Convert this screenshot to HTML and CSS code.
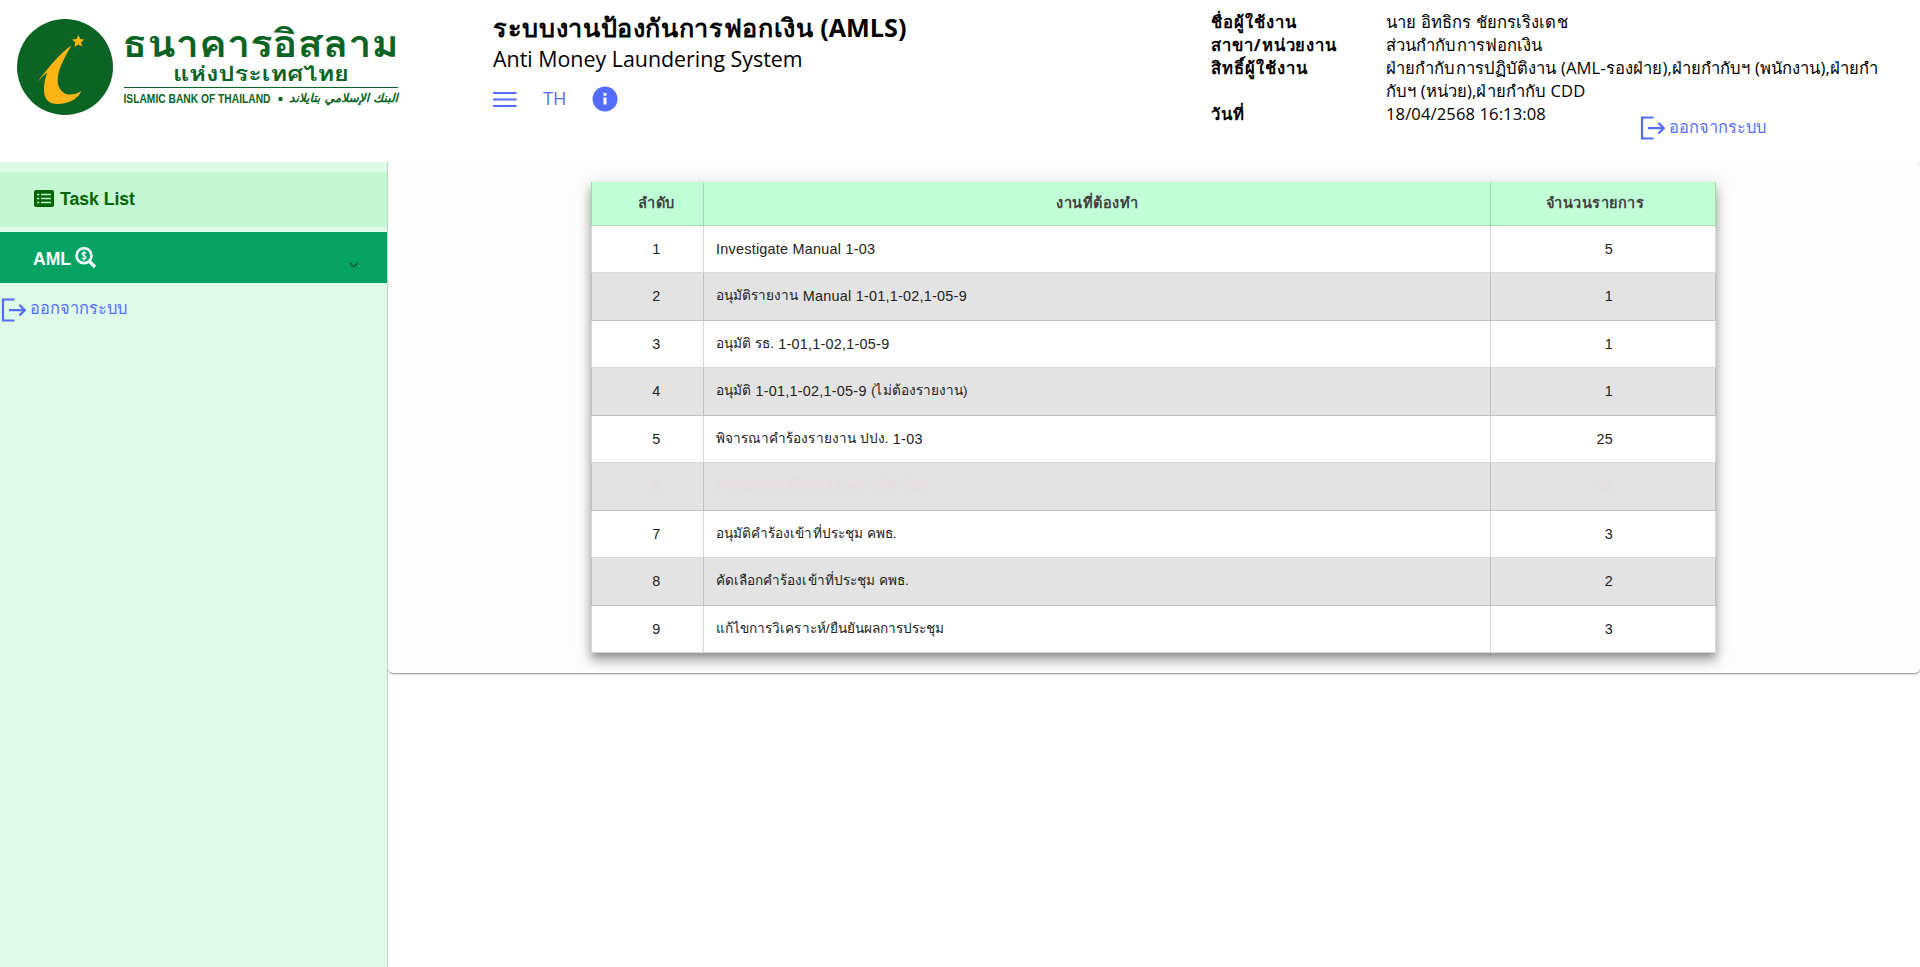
FILE: index.html
```html
<!DOCTYPE html>
<html lang="th">
<head>
<meta charset="utf-8">
<title>AMLS</title>
<link rel="stylesheet" href="styles.css">
</head>
<body>
<svg class="defs" width="0" height="0">
  <symbol id="exit" viewBox="0 0 26 24"><path d="M13.500 1.500H2v21h11.500M8 12.200h16M18.400 6.900l5.400 5.300-5.400 5.300" fill="none" stroke="currentColor" stroke-width="2.200"/></symbol>
</svg>
<header class="header">
  <svg class="logo" viewBox="0 0 420 162" width="420" height="162">
    <circle cx="65" cy="67" r="48" fill="#0b6424"/>
    <path d="M71.500 45.500C60 53 49 67 36.500 83C40 79 43.500 75 47 73C42 88 42 104 57 104C70 104 78 98 81.500 91C72 97 61 96 58 84C56 73 63 60 71.500 45.500Z" fill="#fdb515"/>
    <path d="M78.500 35l1.600 4 4 .6-3 2.800 1.200 4.100-3.900-1.900-3.900 2.100.7-4.400-3.200-2.800 4.500-.4z" fill="#fdb515"/>
    <g fill="#0b6424">
      <text class="logo-th" x="122" y="57" font-size="38" textLength="277" lengthAdjust="spacingAndGlyphs">ธนาคารอิสลาม</text>
      <text class="logo-th" x="173" y="81" font-size="20" textLength="176" lengthAdjust="spacingAndGlyphs">แห่งประเทศไทย</text>
      <rect x="124" y="87" width="274" height="1"/>
      <text class="logo-en" x="123.500" y="103" font-size="12" textLength="147" lengthAdjust="spacingAndGlyphs">ISLAMIC BANK OF THAILAND</text>
      <circle cx="280.500" cy="99" r="2.200"/>
      <text class="logo-ar" x="289" y="102" font-size="12" textLength="109" lengthAdjust="spacingAndGlyphs">البنك الإسلامي بتايلاند</text>
    </g>
  </svg>
  <div class="brand">
    <h1 class="title"><span class="title-th">ระบบงานป้องกันการฟอกเงิน</span> (AMLS)</h1>
    <div class="subtitle">Anti Money Laundering System</div>
    <nav class="tools">
      <svg width="24" height="17" viewBox="0 0 24 17"><path d="M0 2h23.500M0 8.500h23.500M0 15h23.500" stroke="#536dfe" stroke-width="2"/></svg>
      <span class="lang">TH</span>
      <svg width="26" height="26" viewBox="0 0 26 26"><circle cx="13" cy="13" r="12.500" fill="#536dfe"/><path d="M11.500 7h3v2.700h-3zM11.500 11.500h3v7h-3z" fill="#fff"/></svg>
    </nav>
  </div>
  <dl class="info">
    <dt>ชื่อผู้ใช้งาน</dt><dd>นาย อิทธิกร ชัยกรเริงเดช</dd>
    <dt>สาขา/หน่วยงาน</dt><dd>ส่วนกำกับการฟอกเงิน</dd>
    <dt>สิทธิ์ผู้ใช้งาน</dt><dd>ฝ่ายกำกับการปฏิบัติงาน (AML-รองฝ่าย),ฝ่ายกำกับฯ (พนักงาน),ฝ่ายกำ<br>กับฯ (หน่วย),ฝ่ายกำกับ CDD</dd>
    <dt>วันที่</dt><dd>18/04/2568 16:13:08</dd>
    <a class="logout logout-top"><svg width="26" height="24"><use href="#exit"/></svg><span>ออกจากระบบ</span></a>
  </dl>
</header>
<div class="body">
  <aside class="sidebar">
    <a class="task"><svg width="20" height="17" viewBox="0 0 20 17"><rect width="20" height="17" rx="2" fill="#006400"/><path d="M3 4.500h2.300M3 8.500h2.300M3 12.500h2.300M7 4.500h10M7 8.500h10M7 12.500h10" stroke="#c5f7d3" stroke-width="1.700"/></svg><span>Task List</span></a>
    <a class="aml"><span>AML</span><svg width="22" height="22" viewBox="0 0 22 22"><circle cx="9" cy="8.700" r="7.500" fill="none" stroke="#fff" stroke-width="2.500"/><path d="M14.500 14.500l5.500 5.500" stroke="#fff" stroke-width="3.200"/><path d="M11.200 6.300C9 4.700 6.700 5.600 7 7.200c.4 1.500 4 1.100 4.200 3 .1 1.600-2.600 2.200-4.500.7M9 4v10" fill="none" stroke="#fff" stroke-width="1.200"/></svg><svg class="chevron" width="10" height="7" viewBox="0 0 10 7"><path d="M1 1l4 4 4-4" fill="none" stroke="#064d20" stroke-width="1.200"/></svg></a>
    <a class="logout logout-side"><svg width="26" height="24"><use href="#exit"/></svg><span>ออกจากระบบ</span></a>
  </aside>
  <main class="panel">
    <div class="table">
      <div class="row head"><div>ลำดับ</div><div>งานที่ต้องทำ</div><div>จำนวนรายการ</div></div>
      <div class="row"><div>1</div><div>Investigate Manual 1-03</div><div>5</div></div>
      <div class="row even"><div>2</div><div><span class="th">อนุมัติรายงาน</span> Manual 1-01,1-02,1-05-9</div><div>1</div></div>
      <div class="row"><div>3</div><div><span class="th">อนุมัติ รธ.</span> 1-01,1-02,1-05-9</div><div>1</div></div>
      <div class="row even"><div>4</div><div><span class="th">อนุมัติ</span> 1-01,1-02,1-05-9 <span class="th">(ไม่ต้องรายงาน)</span></div><div>1</div></div>
      <div class="row"><div>5</div><div><span class="th">พิจารณาคำร้องรายงาน ปปง.</span> 1-03</div><div>25</div></div>
      <div class="row even faded"><div>6</div><div><span class="th">ตรวจสอบ/แก้ไขการวิเคราะห์คำร้อง</span></div><div>15</div></div>
      <div class="row"><div>7</div><div><span class="th">อนุมัติคำร้องเข้าที่ประชุม คพธ.</span></div><div>3</div></div>
      <div class="row even"><div>8</div><div><span class="th">คัดเลือกคำร้องเข้าที่ประชุม คพธ.</span></div><div>2</div></div>
      <div class="row"><div>9</div><div><span class="th">แก้ไขการวิเคราะห์/ยืนยันผลการประชุม</span></div><div>3</div></div>
    </div>
  </main>
</div>
</body>
</html>
```
FILE: styles.css
```css
* { box-sizing: border-box; }
body { margin: 0; background: #fff; color: #000; font-family: "Open Sans", "Noto Sans", sans-serif; height: 967px; overflow: hidden; }
.defs { display: block; }
.header { height: 162px; display: flex; }
.logo { flex: none; display: block; }
.logo-th { font-family: "Open Sans", "Loma", "Noto Sans", sans-serif; font-weight: 700; }
.logo-en { font-family: "Liberation Sans", sans-serif; font-weight: 700; }
.logo-ar { font-family: "DejaVu Sans", sans-serif; font-weight: 700; font-style: italic; }
.brand { width: 791px; flex: none; padding-left: 73px; }
.title { margin: 10px 0 0; font-size: 25.200px; line-height: 34px; white-space: nowrap; font-weight: 700; }
.title-th { letter-spacing: .65px; }
.subtitle { font-size: 21.400px; line-height: 29px; white-space: nowrap; }
.tools { display: flex; align-items: center; height: 30px; margin-top: 11px; color: #536dfe; font-size: 18px; }
.lang { margin: -3px 26px 0; }
.info { margin: 10px 0 0; display: grid; grid-template-columns: 175px 520px; grid-template-rows: 23px 23px 46px 23px; font-size: 16.600px; line-height: 23px; align-content: start; white-space: nowrap; }
.info dt { font-weight: 700; letter-spacing: .95px; }
.info dd { margin: 0; letter-spacing: .1px; }
.logout { display: flex; align-items: center; gap: 3px; color: #536dfe; font-size: 16.400px; line-height: 24px; }
.logout svg { flex: none; }
.logout span { margin-top: -2px; }
.logout-top { grid-column: 2; margin-left: 254px; margin-top: -9px; }
.body { display: flex; height: 805px; }
.sidebar { width: 388px; flex: none; background: #dffae9; border-right: 1px solid #bdd3c6; padding-top: 10px; font-family: "Liberation Sans", sans-serif; font-weight: 700; font-size: 17.600px; }
.task { display: flex; align-items: center; height: 55px; background: #c5f7d3; padding-left: 34px; gap: 6px; color: #006400; }
.task svg { margin-top: -2px; }
.aml { display: flex; align-items: center; height: 51px; margin-top: 5px; background: #04a263; padding-left: 33px; gap: 4px; color: #fff; }
.aml > span { margin-top: 3px; }
.aml > svg { margin-top: 1px; }
.aml > .chevron { margin: 15px 28px 0 auto; }
.logout-side { margin: 15px 0 0 1px; font-weight: 400; font-family: "Open Sans", sans-serif; }
.logout-side span { margin-top: -4px; }
.panel { flex: 1; height: 511px; padding: 20px 0 0 203px; background: #fdfdfd; border-radius: 5px; box-shadow: 0 1px 2px rgba(0,0,0,.45); overflow: hidden; clip-path: inset(0 0 -6px 0); }
.table { width: 1125px; display: grid; grid-template-rows: 44px 47px 48px 47px 48px 47px 48px 47px 48px 47px; border-radius: 2px; box-shadow: 0 5px 6px -3px rgba(0,0,0,.2), 0 9px 12px 1px rgba(0,0,0,.14), 0 3px 16px 2px rgba(0,0,0,.12), 0 6px 10px rgba(0,0,0,.12); font: 14.400px "Liberation Sans", "Open Sans", sans-serif; letter-spacing: .25px; color: #212121; }
.row { display: grid; grid-template-columns: 113px 787px 225px; background: #fff; border-bottom: 1px solid #d8d8d8; }
.row > div { display: flex; align-items: center; border-right: 1px solid #d8d8d8; padding-left: 12px; white-space: pre; line-height: 20px; }
.row > div:first-child { border-left: 1px solid #d8d8d8; padding-left: 18px; justify-content: center; }
.row > div:last-child { justify-content: flex-end; padding-right: 102px; }
.th { font-size: 13.600px; letter-spacing: .05px; }
.even { background: #e3e3e3; }
.even, .even > div, .even > div:first-child { border-color: #bfbfbf; }
.even > div { padding-bottom: 1px; }
.faded { color: #e6dcdc; }
.head { background: #c0ffd6; color: #424242; font-weight: 700; font-size: 14.500px; letter-spacing: .5px; border-radius: 2px 2px 0 0; }
.head > div { padding-bottom: 2px; }
.head, .head > div, .head > div:first-child { border-color: #a3d8b5; }
.head > div:nth-child(2) { justify-content: center; padding: 0 0 2px; }
.head > div:last-child { justify-content: center; padding: 0 16px 2px 0; }
```
